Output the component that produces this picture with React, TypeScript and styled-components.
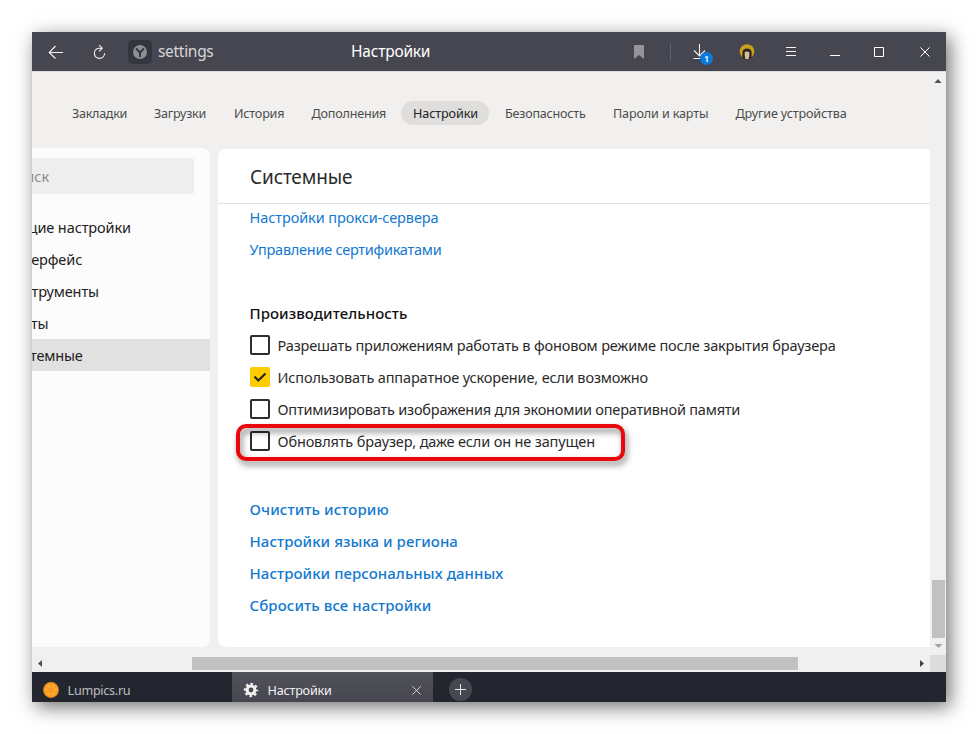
import React from "react";
import styled, { createGlobalStyle } from "styled-components";

const GlobalStyle = createGlobalStyle`
  *, *::before, *::after { box-sizing: border-box; }
  html, body { margin: 0; background: #fff; }
  body { font-family: "Noto Sans", "Open Sans", sans-serif; overflow: hidden; }
`;

const Stage = styled.div`
  width: 978px;
  height: 734px;
  padding: 32px;
  overflow: hidden;
`;

const BrowserWindow = styled.div`
  display: flex;
  flex-direction: column;
  width: 914px;
  height: 670px;
  background: #f1f0ee;
  box-shadow: 4px 5px 18px rgba(0, 0, 0, 0.56);
`;

/* Title bar */
const TitleBar = styled.header`
  display: grid;
  grid-template-columns: 48px 38px 40px 190px 1fr 34px 29px 30px 64px 23px 66px 22px 56px;
  align-items: center;
  justify-items: center;
  flex: none;
  height: 39px;
  background: #464650;
  color: #f4f4f5;
  svg { display: block; }
  > :last-child { margin-left: 14px; }
`;

const SiteBadge = styled.span`
  display: grid;
  place-items: center;
  width: 24px;
  height: 24px;
  margin-left: 4px;
  border-radius: 5px;
  background: #33363e;
`;

const Address = styled.span`
  justify-self: start;
  padding-bottom: 2px;
  font-size: 15.5px;
  line-height: 22px;
  letter-spacing: -0.3px;
  color: #d6d6d9;
`;

const PageTitle = styled.span`
  justify-self: start;
  padding: 0 0 2px 3px;
  font-size: 15.5px;
  line-height: 22px;
  letter-spacing: -0.2px;
  color: #fff;
`;

const Divider = styled.span`
  width: 1px;
  height: 16px;
  background: #62626b;
`;

const DownloadButton = styled.span`
  position: relative;
  width: 24px;
  height: 24px;
`;

const Count = styled.span`
  position: absolute;
  left: 12px;
  top: 12px;
  width: 13px;
  height: 13px;
  border-radius: 50%;
  background: #0a7bdc;
  color: #fff;
  font-size: 9px;
  font-weight: 600;
  line-height: 13px;
  text-align: center;
`;

/* Page */
const Viewport = styled.div`
  display: grid;
  grid-template-columns: 898px 16px;
  grid-template-rows: 584px 17px;
  flex: none;
  height: 601px;
`;

const Page = styled.div`
  display: flex;
  flex-direction: column;
  overflow: hidden;
  background: #f1f0ee;
  border-top: 1px solid #dddcdb;
`;

const Nav = styled.nav`
  display: flex;
  align-items: center;
  flex: none;
  height: 24px;
  margin: 29px 0 24px 28px;
`;

const NavItem = styled.a<{ $width: number; $spacing: number; $active?: boolean }>`
  display: block;
  flex: none;
  width: ${(p) => p.$width}px;
  height: 24px;
  padding-left: 12px;
  border-radius: 12px;
  background: ${(p) => (p.$active ? "#dfdedd" : "transparent")};
  color: ${(p) => (p.$active ? "#222" : "#4c4c4c")};
  font-size: 12.6px;
  line-height: 25px;
  letter-spacing: ${(p) => p.$spacing}px;
  white-space: nowrap;
  ${(p) => p.$active && "margin: 0 4px 0 -1px;"}
`;

const Columns = styled.div`
  display: flex;
  gap: 8px;
  height: 498px;
`;

const Sidebar = styled.aside`
  flex: none;
  width: 178px;
  height: 499px;
  margin-top: -1px;
  overflow: hidden;
  border-radius: 0 8px 8px 0;
  background: #fcfcfc;
`;

const Search = styled.div`
  width: 162px;
  height: 36px;
  margin: 10px 0 17px;
  border-radius: 0 3px 3px 0;
  overflow: hidden;
  background: #eee;
  color: #8a8a8a;
  font-size: 14.5px;
  line-height: 37px;
  text-indent: -26px;
  white-space: nowrap;
`;

const SideItem = styled.a<{ $active?: boolean; $spacing: number }>`
  display: block;
  height: 32px;
  background: ${(p) => (p.$active ? "#e1e1e1" : "transparent")};
  color: #222;
  font-size: 14.5px;
  line-height: 32px;
  letter-spacing: ${(p) => p.$spacing}px;
  text-indent: -27px;
  white-space: nowrap;
`;

const Panel = styled.main`
  flex: 1;
  border-radius: 8px 0 0 8px;
  background: #fff;
`;

const PanelHeader = styled.h1`
  height: 55px;
  margin: 0;
  padding-left: 32px;
  border-bottom: 1px solid #dfdfdf;
  color: #2b2b2b;
  font-size: 19px;
  font-weight: 400;
  line-height: 56px;
  letter-spacing: -0.15px;
`;

const Group = styled.section<{ $gap?: number }>`
  display: flex;
  flex-direction: column;
  align-items: flex-start;
  margin-top: ${(p) => p.$gap ?? 0}px;
  padding-left: 32px;
`;

const Link = styled.a<{ $spacing: number; $bold?: boolean }>`
  height: 32px;
  margin-left: -0.5px;
  color: #1279cf;
  font-size: ${(p) => (p.$bold ? 15 : 14.5)}px;
  font-weight: ${(p) => (p.$bold ? 550 : 400)};
  line-height: 32px;
  letter-spacing: ${(p) => p.$spacing}px;
  white-space: nowrap;
`;

const GroupTitle = styled.h2`
  height: 32px;
  margin: 0 0 0 -0.5px;
  color: #111;
  font-size: 15px;
  font-weight: 550;
  line-height: 32px;
  letter-spacing: 0.06px;
`;

const Option = styled.label<{ $spacing: number }>`
  position: relative;
  display: flex;
  align-items: center;
  gap: 7.5px;
  height: 32px;
  color: #2a2a2a;
  font-size: 14.5px;
  line-height: 32px;
  letter-spacing: ${(p) => p.$spacing}px;
  white-space: nowrap;
`;

const Box = styled.span<{ $checked?: boolean }>`
  display: grid;
  place-items: center;
  flex: none;
  width: 20px;
  height: 20px;
  border: 2px solid ${(p) => (p.$checked ? "#fc0" : "#2d2d2f")};
  border-radius: 2px;
  background: ${(p) => (p.$checked ? "#fc0" : "#fff")};
`;

const Highlight = styled.span`
  position: absolute;
  left: -14px;
  top: -1px;
  width: 389px;
  height: 37px;
  border: 4px solid #ea080c;
  border-radius: 10px;
  filter: drop-shadow(2px 4px 3px rgba(0, 0, 0, 0.5));
  pointer-events: none;
`;

/* Scrollbars */
const VerticalBar = styled.div`
  display: flex;
  flex-direction: column;
  align-items: center;
  border-top: 1px solid #dddcdb;
  background: #f0f0f0;
  svg { display: block; }
`;

const VerticalTrack = styled.div`
  display: flex;
  flex-direction: column;
  justify-content: flex-end;
  align-items: center;
  width: 100%;
  height: 550px;
`;

const VerticalThumb = styled.div`
  width: 13px;
  height: 58px;
  margin-left: 1px;
  background: #c1c1c1;
`;

const HorizontalBar = styled.div`
  display: flex;
  align-items: center;
  background: #f0f0f0;
  svg { display: block; }
`;

const HorizontalThumb = styled.div`
  width: 606px;
  height: 13px;
  margin: 0 121px 0 144px;
  background: #c1c1c1;
`;

const Corner = styled.div`
  background: #dcdcdc;
`;

/* Tab strip */
const TabStrip = styled.footer`
  display: flex;
  flex: none;
  height: 30px;
  background: #24262f;
  svg { display: block; flex: none; }
`;

const Tab = styled.div<{ $active?: boolean }>`
  display: flex;
  align-items: center;
  width: ${(p) => (p.$active ? 201 : 200)}px;
  height: 30px;
  padding: 6px 12px 0 11px;
  background: ${(p) => (p.$active ? "linear-gradient(#52525b, #464650)" : "transparent")};
  color: ${(p) => (p.$active ? "#f2f2f3" : "#bdbec1")};
`;

const TabLabel = styled.span<{ $spacing: number }>`
  flex: 1;
  padding: 1px 0 0 8.6px;
  font-size: 12.6px;
  line-height: 18px;
  letter-spacing: ${(p) => p.$spacing}px;
  white-space: nowrap;
`;

const NewTab = styled.button`
  display: grid;
  place-items: center;
  width: 23px;
  height: 23px;
  margin: 6px 0 0 16px;
  padding: 0;
  border: 0;
  border-radius: 50%;
  background: #464750;
`;

const BackIcon = () => (
  <svg width="16" height="14" viewBox="0 0 16 14" fill="none" stroke="#f4f4f5" strokeWidth="1.1">
    <path d="M15 7.5H1.5M7.5 1L1.2 7.5L7.5 13.5" />
  </svg>
);

const ReloadIcon = () => (
  <svg width="14" height="16" viewBox="0 0 14 16" fill="none" stroke="#f4f4f5" strokeWidth="1.15">
    <path d="M9.8 4.2H7A5.1 5.1 0 1 0 12.6 9.3" />
    <path d="M7.2 1.1L10.2 4.2L7.2 7.4" />
  </svg>
);

const SiteIcon = () => (
  <svg width="14" height="14" viewBox="0 0 14 14">
    <circle cx="7" cy="7" r="7" fill="#8d9096" />
    <path d="M3.1 3.4L7 7.7L10.9 3.4M7 7V12" fill="none" stroke="#34373f" strokeWidth="2" />
  </svg>
);

const BookmarkIcon = () => (
  <svg width="10" height="14" viewBox="0 0 10 14">
    <path d="M0 0H10V14L5 10L0 14Z" fill="#94949a" />
  </svg>
);

const DownloadIcon = () => (
  <svg width="24" height="24" viewBox="0 0 24 24" fill="none" stroke="#f4f4f5" strokeWidth="1.1">
    <path d="M11.5 4V16M6 10.5L11.5 16L17 10.5M5.5 18.5H16" />
  </svg>
);

const AvatarIcon = () => (
  <svg width="16" height="16" viewBox="0 0 16 16">
    <circle cx="8" cy="7.5" r="7.3" fill="#c9a01f" />
    <path d="M3.4 14V8.5C3.4 3 12.6 3 12.6 8.5V14Q8 16.5 3.4 14Z" fill="#2b2422" />
    <path d="M5.7 8Q8 6.8 10.3 8V11.5L9.7 15H6.3L5.7 11.5Z" fill="#d8bd9b" />
  </svg>
);

const MenuIcon = () => (
  <svg width="10" height="11" viewBox="0 0 10 11" stroke="#f4f4f5">
    <path d="M0 1.5H10M0 5.5H10M0 9.5H10" />
  </svg>
);

const MinimizeIcon = () => (
  <svg width="10" height="11" viewBox="0 0 10 11" stroke="#fff">
    <path d="M0 9.5H10" />
  </svg>
);

const MaximizeIcon = () => (
  <svg width="10" height="10" viewBox="0 0 10 10" fill="none" stroke="#fff">
    <path d="M0.5 0.5H9.5V9.5H0.5Z" />
  </svg>
);

const CloseIcon = ({ size, color }: { size: number; color: string }) => (
  <svg width={size} height={size} viewBox="0 0 10 10" fill="none" stroke={color} strokeWidth="1">
    <path d="M0.4 0.4L9.6 9.6M9.6 0.4L0.4 9.6" />
  </svg>
);

const CheckIcon = () => (
  <svg width="14" height="12" viewBox="0 0 14 12" fill="none" stroke="#222" strokeWidth="2">
    <path d="M1.5 5.5L5.3 9.5L12.5 2.5" />
  </svg>
);

const OrangeIcon = () => (
  <svg width="16" height="16" viewBox="0 0 17 17">
    <circle cx="8.5" cy="8.5" r="8.4" fill="#f6911d" />
    <circle cx="8.5" cy="8.5" r="6.6" fill="#fba92f" />
    <path d="M8.5 2V15M2.9 5.2L14.1 11.8M14.1 5.2L2.9 11.8" stroke="#f28a1b" strokeWidth="0.8" />
  </svg>
);

const GearIcon = () => (
  <svg width="16" height="16" viewBox="0 0 16 16" fill="none" stroke="#f0f0f1">
    <circle cx="8" cy="8" r="3.9" strokeWidth="3" />
    <circle cx="8" cy="8" r="6" strokeWidth="2.4" strokeDasharray="2.5 2.212" strokeDashoffset="1.25" />
  </svg>
);

const Arrow = ({ d, w, h, color }: { d: string; w: number; h: number; color: string }) => (
  <svg width={w} height={h} viewBox={`0 0 ${w} ${h}`}>
    <path d={d} fill={color} />
  </svg>
);

const navItems = [
  { label: "Закладки", width: 82, spacing: -0.3 },
  { label: "Загрузки", width: 80, spacing: -0.25 },
  { label: "История", width: 77.5, spacing: -0.2 },
  { label: "Дополнения", width: 102.5, spacing: -0.2 },
  { label: "Настройки", width: 88, spacing: -0.1, active: true },
  { label: "Безопасность", width: 108, spacing: -0.23 },
  { label: "Пароли и карты", width: 122.5, spacing: -0.14 },
  { label: "Другие устройства", width: 136, spacing: -0.15 },
];

const sideItems = [
  { label: "Общие настройки", spacing: -0.1 },
  { label: "Интерфейс", spacing: -0.1 },
  { label: "Инструменты", spacing: -0.13 },
  { label: "Сайты", spacing: -0.13 },
  { label: "Системные", spacing: -0.16, active: true },
];

const options = [
  { label: "Разрешать приложениям работать в фоновом режиме после закрытия браузера", spacing: -0.167 },
  { label: "Использовать аппаратное ускорение, если возможно", spacing: -0.14, checked: true },
  { label: "Оптимизировать изображения для экономии оперативной памяти", spacing: -0.2 },
  { label: "Обновлять браузер, даже если он не запущен", spacing: -0.147, marked: true },
];

const boldLinks = [
  { label: "Очистить историю", spacing: 0.08 },
  { label: "Настройки языка и региона", spacing: 0.06 },
  { label: "Настройки персональных данных", spacing: 0.06 },
  { label: "Сбросить все настройки", spacing: 0.08 },
];

export default function App() {
  return (
    <Stage>
      <GlobalStyle />
      <BrowserWindow>
        <TitleBar>
          <BackIcon />
          <ReloadIcon />
          <SiteBadge><SiteIcon /></SiteBadge>
          <Address>settings</Address>
          <PageTitle>Настройки</PageTitle>
          <BookmarkIcon />
          <Divider />
          <DownloadButton>
            <DownloadIcon />
            <Count>1</Count>
          </DownloadButton>
          <AvatarIcon />
          <MenuIcon />
          <MinimizeIcon />
          <MaximizeIcon />
          <CloseIcon size={10} color="#fff" />
        </TitleBar>

        <Viewport>
          <Page>
            <Nav>
              {navItems.map((n) => (
                <NavItem key={n.label} $width={n.width} $spacing={n.spacing} $active={n.active}>{n.label}</NavItem>
              ))}
            </Nav>
            <Columns>
              <Sidebar>
                <Search>Поиск</Search>
                {sideItems.map((s) => (
                  <SideItem key={s.label} $spacing={s.spacing} $active={s.active}>{s.label}</SideItem>
                ))}
              </Sidebar>
              <Panel>
                <PanelHeader>Системные</PanelHeader>
                <Group $gap={-3}>
                  <Link $spacing={-0.08}>Настройки прокси-сервера</Link>
                  <Link $spacing={-0.26}>Управление сертификатами</Link>
                </Group>
                <Group $gap={32}>
                  <GroupTitle>Производительность</GroupTitle>
                  {options.map((o) => (
                    <Option key={o.label} $spacing={o.spacing}>
                      {o.marked && <Highlight />}
                      <Box $checked={o.checked}>{o.checked && <CheckIcon />}</Box>
                      {o.label}
                    </Option>
                  ))}
                </Group>
                <Group $gap={36}>
                  {boldLinks.map((l) => (
                    <Link key={l.label} $spacing={l.spacing} $bold>{l.label}</Link>
                  ))}
                </Group>
              </Panel>
            </Columns>
          </Page>
          <VerticalBar>
            <Arrow w={16} h={16} d="M4.5 11L8 7L11.5 11Z" color="#505050" />
            <VerticalTrack><VerticalThumb /></VerticalTrack>
            <Arrow w={16} h={17} d="M4.5 6L8.5 10L12.5 6Z" color="#a3a3a3" />
          </VerticalBar>
          <HorizontalBar>
            <Arrow w={16} h={17} d="M10 5V12L6 8.5Z" color="#505050" />
            <HorizontalThumb />
            <Arrow w={11} h={17} d="M1 5V12L5 8.5Z" color="#404040" />
          </HorizontalBar>
          <Corner />
        </Viewport>

        <TabStrip>
          <Tab>
            <OrangeIcon />
            <TabLabel $spacing={-0.29}>Lumpics.ru</TabLabel>
          </Tab>
          <Tab $active>
            <GearIcon />
            <TabLabel $spacing={-0.21}>Настройки</TabLabel>
            <CloseIcon size={9} color="#e4e4e6" />
          </Tab>
          <NewTab aria-label="+">
            <svg width="11" height="11" viewBox="0 0 11 11" stroke="#e6e6e8">
              <path d="M5.5 0V11M0 5.5H11" />
            </svg>
          </NewTab>
        </TabStrip>
      </BrowserWindow>
    </Stage>
  );
}
